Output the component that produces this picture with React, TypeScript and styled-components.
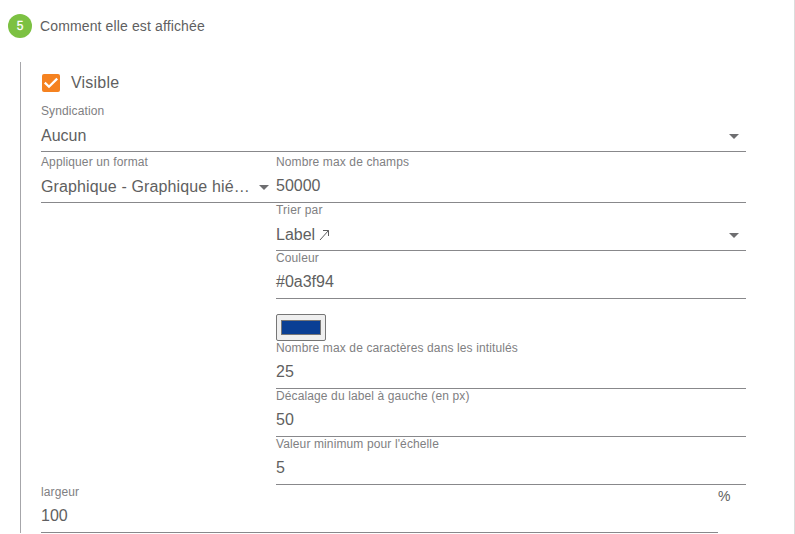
import React from "react";
import styled, { createGlobalStyle } from "styled-components";

const GlobalStyle = createGlobalStyle`
  * { box-sizing: border-box; }
  body {
    margin: 0;
    background: #fff;
    color: #5f5f61;
    font-family: "Liberation Sans", Arial, sans-serif;
    overflow: hidden;
  }
`;

const Panel = styled.main`
  width: 795px;
  height: 534px;
  padding-top: 14px;
  border-right: 1px solid #dcdcdc;
  overflow: hidden;
`;

const StepHeader = styled.header`
  display: flex;
  align-items: center;
  gap: 8px;
  height: 24px;
  padding-left: 8px;
`;

const StepNumber = styled.span`
  width: 24px;
  height: 24px;
  border-radius: 50%;
  background: #7cc142;
  color: #fff;
  font-size: 12px;
  line-height: 24px;
  text-align: center;
  -webkit-text-stroke: 0.3px #fff;
`;

const StepTitle = styled.h2`
  margin: 0;
  font-size: 14px;
  font-weight: 400;
  line-height: 24px;
  letter-spacing: 0.13px;
`;

const StepBody = styled.section`
  width: 726px;
  height: 471px;
  margin: 24px 0 0 20px;
  padding: 11px 0 0 20px;
  border-left: 1px solid #a6a6aa;
`;

const CheckRow = styled.label`
  display: flex;
  align-items: center;
  height: 20px;
  margin-bottom: 11px;
  padding-left: 1px;
  gap: 11px;
  font-size: 16px;
  letter-spacing: 0.2px;
`;

const CheckBox = styled.span`
  display: flex;
  width: 18px;
  height: 18px;
  border-radius: 2px;
  background: #f58220;
`;

const FieldBox = styled.div<{ $height: number; $width?: number }>`
  display: flex;
  flex-direction: column;
  width: ${(p) => (p.$width ? `${p.$width}px` : "100%")};
  height: ${(p) => p.$height}px;
  border-bottom: 1px solid #88888b;
`;

const FieldLabel = styled.label<{ $offset: number; $spacing: number }>`
  height: 14px;
  margin-top: ${(p) => p.$offset}px;
  color: #808082;
  font-size: 12px;
  line-height: 14px;
  letter-spacing: ${(p) => p.$spacing}px;
  white-space: nowrap;
`;

const FieldValue = styled.div<{ $lift: number; $spacing: number }>`
  display: flex;
  align-items: center;
  justify-content: space-between;
  height: 24px;
  margin-top: ${(p) => p.$lift}px;
  font-size: 16px;
  line-height: 24px;
  letter-spacing: ${(p) => p.$spacing}px;
  white-space: nowrap;
`;

const Caret = styled.span`
  width: 0;
  height: 0;
  margin: 0 7px 0 0;
  border: 5px solid transparent;
  border-top-color: #6e6e70;
  border-bottom: 0;
`;

const Columns = styled.div`
  display: grid;
  grid-template-columns: 235px 470px;
  align-items: start;
`;

const SwatchRow = styled.div`
  height: 42px;
  padding-top: 15px;
`;

const Swatch = styled.button`
  display: block;
  width: 50px;
  height: 27px;
  padding: 5px 4px;
  border: 1px solid #767676;
  border-radius: 2px;
  background: #efefef;
`;

const SwatchColor = styled.span`
  display: block;
  height: 15px;
  border: 1px solid #777;
  background: #0a3f94;
`;

const WidthRow = styled.div`
  display: flex;
`;

const Unit = styled.span`
  font-size: 14px;
  line-height: 22px;
`;

const SortLabel = styled.span`
  display: flex;
  align-items: center;
  gap: 4px;
`;

type FieldProps = {
  label: string;
  children: React.ReactNode;
  select?: boolean;
  height?: number;
  width?: number;
  offset?: number;
  lift?: number;
  spacing?: number;
  labelSpacing?: number;
};

function Field({
  label, children, select, height = 48, width, offset = 0, lift = 6, spacing = 0, labelSpacing = 0.12,
}: FieldProps) {
  return (
    <FieldBox $height={height} $width={width}>
      <FieldLabel $offset={offset} $spacing={labelSpacing}>{label}</FieldLabel>
      <FieldValue $lift={lift} $spacing={spacing}>
        <span>{children}</span>
        {select && <Caret />}
      </FieldValue>
    </FieldBox>
  );
}

export default function App() {
  return (
    <>
      <GlobalStyle />
      <Panel>
        <StepHeader>
          <StepNumber>5</StepNumber>
          <StepTitle>Comment elle est affichée</StepTitle>
        </StepHeader>
        <StepBody>
          <CheckRow>
            <CheckBox>
              <svg width="18" height="18" viewBox="0 0 18 18" fill="none">
                <path d="M2.8 8.6 7 12.7 15.2 4.6" stroke="#fff" strokeWidth="2.3" />
              </svg>
            </CheckBox>
            Visible
          </CheckRow>
          <Field label="Syndication" select>Aucun</Field>
          <Columns>
            <Field label="Appliquer un format" select height={51} offset={3} spacing={0.13}>
              Graphique - Graphique hié…
            </Field>
            <div>
              <Field label="Nombre max de champs" height={51} offset={3} lift={5}>50000</Field>
              <Field label="Trier par" select labelSpacing={0.2}>
                <SortLabel>
                  Label
                  <svg width="11" height="12" viewBox="0 0 11 12" fill="none" stroke="#5c5c5e">
                    <path d="M1 11 9.5 1.5M4 1.5h5.5V7" />
                  </svg>
                </SortLabel>
              </Field>
              <Field label="Couleur" lift={5}>#0a3f94</Field>
              <SwatchRow>
                <Swatch aria-label="Couleur"><SwatchColor /></Swatch>
              </SwatchRow>
              <Field label="Nombre max de caractères dans les intitulés" lift={5}>25</Field>
              <Field label="Décalage du label à gauche (en px)" lift={5}>50</Field>
              <Field label="Valeur minimum pour l'échelle" lift={5}>5</Field>
            </div>
          </Columns>
          <WidthRow>
            <Field label="largeur" width={677} lift={5}>100</Field>
            <Unit>%</Unit>
          </WidthRow>
        </StepBody>
      </Panel>
    </>
  );
}
